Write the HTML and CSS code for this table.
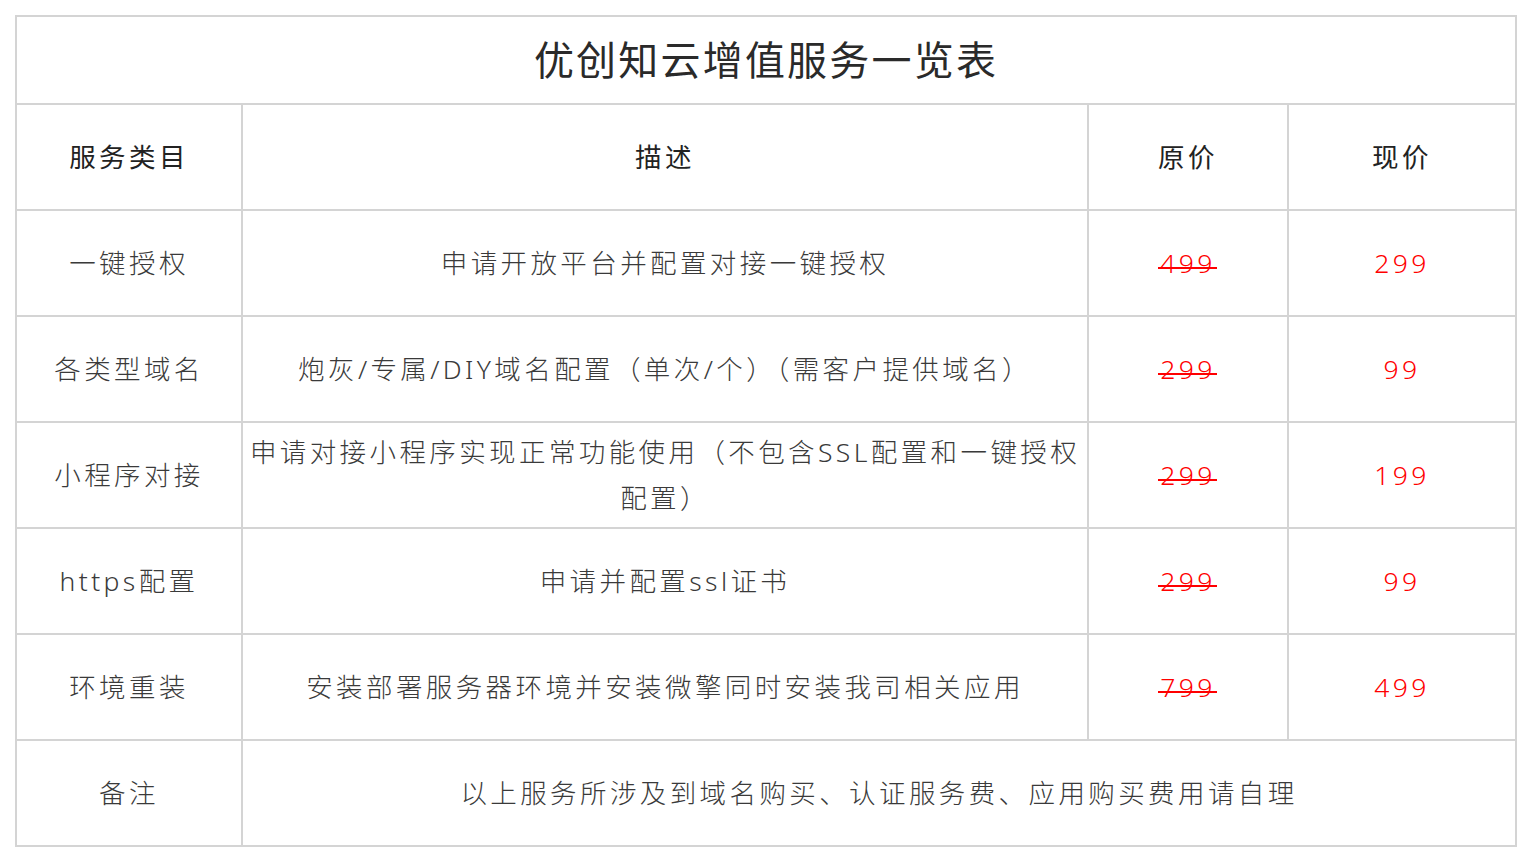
FILE: index.html
```html
<!DOCTYPE html>
<html lang="zh-CN">
<head>
<meta charset="utf-8">
<title>优创知云增值服务一览表</title>
<link rel="stylesheet" href="styles.css">
</head>
<body>
<table class="price-table">
  <colgroup>
    <col class="c-cat">
    <col class="c-desc">
    <col class="c-old">
    <col class="c-new">
  </colgroup>
  <thead>
    <tr class="title-row"><th colspan="4" class="title">优创知云增值服务一览表</th></tr>
    <tr class="head-row">
      <th>服务类目</th>
      <th>描述</th>
      <th>原价</th>
      <th>现价</th>
    </tr>
  </thead>
  <tbody>
    <tr>
      <td>一键授权</td>
      <td class="desc">申请开放平台并配置对接一键授权</td>
      <td><s class="old">499</s></td>
      <td class="new">299</td>
    </tr>
    <tr>
      <td>各类型域名</td>
      <td class="desc">炮灰/专属/DIY域名配置（单次/个）（需客户提供域名）</td>
      <td><s class="old">299</s></td>
      <td class="new">99</td>
    </tr>
    <tr>
      <td>小程序对接</td>
      <td class="desc">申请对接小程序实现正常功能使用（不包含SSL配置和一键授权配置）</td>
      <td><s class="old">299</s></td>
      <td class="new">199</td>
    </tr>
    <tr>
      <td>https配置</td>
      <td class="desc">申请并配置ssl证书</td>
      <td><s class="old">299</s></td>
      <td class="new">99</td>
    </tr>
    <tr>
      <td>环境重装</td>
      <td class="desc">安装部署服务器环境并安装微擎同时安装我司相关应用</td>
      <td><s class="old">799</s></td>
      <td class="new">499</td>
    </tr>
    <tr>
      <td>备注</td>
      <td colspan="3" class="desc">以上服务所涉及到域名购买、认证服务费、应用购买费用请自理</td>
    </tr>
  </tbody>
</table>
</body>
</html>
```

FILE: styles.css
```css
html, body {
  margin: 0;
  padding: 0;
  background: #fff;
}
body {
  padding: 15px;
  font-family: "Noto Sans", "Noto Sans CJK SC", sans-serif;
}
.price-table {
  border-collapse: collapse;
  table-layout: fixed;
  width: 1502px;
  border: 2px solid #d4d4d4;
}
.c-cat { width: 226px; }
.c-desc { width: 846px; }
.c-old { width: 200px; }
.c-new { width: 228px; }

.price-table th,
.price-table td {
  border: 2px solid #d4d4d4;
  text-align: center;
  vertical-align: middle;
  padding: 0 8px;
  font-size: 26.5px;
  letter-spacing: 3.4px;
  line-height: 46px;
  color: #3a3a3a;
  font-weight: 300;
}
.price-table td.desc {
  padding: 0 2px;
}
.price-table th {
  font-weight: 400;
  color: #222;
}
.title-row th.title {
  height: 86px;
  font-size: 40px;
  letter-spacing: 2.2px;
  line-height: 48px;
  color: #2a2a2a;
}
.head-row th,
tbody tr td {
  height: 104px;
}
.new {
  color: #ff0000 !important;
}
.old {
  position: relative;
  color: #ff0000;
  text-decoration: none;
}
.old::after {
  content: "";
  position: absolute;
  left: -2px;
  right: -1px;
  top: 60%;
  height: 2px;
  background: #ff0000;
}
```
